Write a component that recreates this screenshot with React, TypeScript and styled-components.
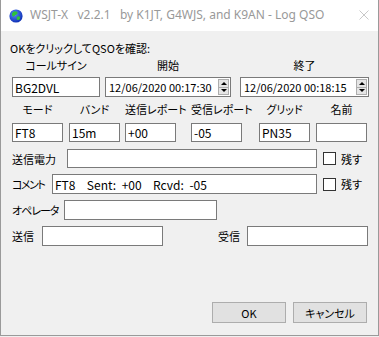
import React from "react";
import styled, { createGlobalStyle } from "styled-components";

const GlobalStyle = createGlobalStyle`
  html, body {
    margin: 0;
    padding: 0;
    background: #f0f0f0;
  }
  body {
    font-family: "Noto Sans CJK JP", "Noto Sans", sans-serif;
    font-size: 11px;
    color: #000;
  }
`;

const Window = styled.div`
  width: 379px;
  height: 336px;
  box-sizing: border-box;
  border: 1px solid #9a9a9a;
  border-top: none;
  background: #f0f0f0;
  display: flex;
  flex-direction: column;
`;

const TitleBar = styled.div`
  height: 31px;
  flex-shrink: 0;
  background: #fff;
  display: flex;
  align-items: center;
  padding-left: 8px;
`;

const Title = styled.span`
  font-family: "Noto Sans", "Open Sans", sans-serif;
  font-size: 12px;
  color: #999;
  white-space: pre;
  margin-left: 7px;
  margin-top: -2px;
`;

const CloseButton = styled.div`
  margin-left: auto;
  width: 28px;
  height: 31px;
  display: flex;
  align-items: center;
  justify-content: center;
  margin-top: -1px;
`;

const Body = styled.div`
  flex: 1;
  display: flex;
  flex-direction: column;
  padding: 0 10px 12px 11px;
  font-feature-settings: "palt";
`;

const Prompt = styled.div`
  line-height: 14px;
  margin: 10px 0 0 -2px;
  white-space: nowrap;
`;

const FieldGrid = styled.div<{ $mt: number }>`
  display: flex;
  margin-top: ${(p) => p.$mt}px;
`;

const Column = styled.div<{ $w: number; $ml?: number }>`
  width: ${(p) => p.$w}px;
  margin-left: ${(p) => p.$ml ?? 0}px;
  display: flex;
  flex-direction: column;
  flex-shrink: 0;
`;

const ColLabel = styled.div<{ $gap: number }>`
  line-height: 14px;
  text-align: center;
  white-space: nowrap;
  margin-bottom: ${(p) => p.$gap}px;
`;

const TextBox = styled.div<{ $w?: number; $h?: number; $ws?: number }>`
  box-sizing: border-box;
  width: ${(p) => (p.$w ? `${p.$w}px` : "100%")};
  height: ${(p) => p.$h ?? 20}px;
  border: 1px solid #7a7a7a;
  background: #fff;
  display: flex;
  align-items: center;
  padding-left: 2px;
  font-size: 12px;
  word-spacing: ${(p) => p.$ws ?? 0}px;
  white-space: pre;
  flex-shrink: 0;
  overflow: hidden;
`;

const DateBox = styled(TextBox)`
  padding-left: 3px;
  padding-right: 1px;
  font-size: 11px;
`;

const DateText = styled.span`
  flex: 1;
`;

const Spinner = styled.div`
  width: 11px;
  height: 16px;
  box-sizing: border-box;
  border: 1px solid #adadad;
  background: #e5e5e5;
  display: flex;
  flex-direction: column;
`;

const SpinHalf = styled.div<{ $down?: boolean }>`
  flex: 1;
  display: flex;
  align-items: center;
  justify-content: center;
  border-top: ${(p) => (p.$down ? "1px solid #adadad" : "none")};

  &::after {
    content: "";
    width: 0;
    height: 0;
    border-left: 3px solid transparent;
    border-right: 3px solid transparent;
    ${(p) =>
      p.$down ? "border-top: 3px solid #000;" : "border-bottom: 3px solid #000;"}
  }
`;

const Row = styled.div<{ $mt: number }>`
  display: flex;
  align-items: center;
  margin-top: ${(p) => p.$mt}px;
`;

const RowLabel = styled.span<{ $w: number; $ls?: number }>`
  width: ${(p) => p.$w}px;
  flex-shrink: 0;
  white-space: nowrap;
  line-height: 14px;
  letter-spacing: ${(p) => p.$ls ?? 0}px;
`;

const Group = styled.div<{ $push?: boolean }>`
  display: flex;
  align-items: center;
  margin-left: ${(p) => (p.$push ? "auto" : "0")};
`;

const CheckBox = styled.div`
  width: 13px;
  height: 13px;
  box-sizing: border-box;
  border: 1px solid #333;
  background: #fff;
  margin-left: 6px;
`;

const CheckLabel = styled.span`
  margin-left: 5px;
  line-height: 14px;
  white-space: nowrap;
`;

const SideLabel = styled.span`
  margin-right: 7px;
  line-height: 14px;
  white-space: nowrap;
`;

const Footer = styled.div`
  margin-top: auto;
  display: flex;
  justify-content: flex-end;
  gap: 7px;
  padding-right: 1px;
`;

const Button = styled.div`
  width: 74px;
  height: 21px;
  box-sizing: border-box;
  border: 1px solid #adadad;
  background: #e1e1e1;
  display: flex;
  align-items: center;
  justify-content: center;
`;

function GlobeIcon() {
  return (
    <svg width="14" height="14" viewBox="0 0 14 14">
      <defs>
        <radialGradient id="sea" cx="0.4" cy="0.35" r="0.7">
          <stop offset="0" stopColor="#5a8cff" />
          <stop offset="1" stopColor="#0a2ab0" />
        </radialGradient>
      </defs>
      <circle cx="7" cy="7" r="6.6" fill="url(#sea)" />
      <path d="M5 2.5 C7 2 9 3 8.5 4.5 C8 6 6 5.5 5.5 7 C5 8.5 3.5 7.5 3 6 C2.6 4.5 3.5 3 5 2.5 Z" fill="#2fc23a" />
      <path d="M8.5 7.5 C10 7 11.5 8 11 9.5 C10.5 11 9 11.5 8 10.5 C7.3 9.7 7.5 8 8.5 7.5 Z" fill="#2fc23a" />
    </svg>
  );
}

function CloseIcon() {
  return (
    <svg width="10" height="10" viewBox="0 0 10 10">
      <path d="M0.5 0.5 L9.5 9.5 M9.5 0.5 L0.5 9.5" stroke="#c8c8c8" strokeWidth="1" />
    </svg>
  );
}

function DateField({ value }: { value: string }) {
  return (
    <DateBox>
      <DateText>{value}</DateText>
      <Spinner>
        <SpinHalf />
        <SpinHalf $down />
      </Spinner>
    </DateBox>
  );
}

export default function App() {
  return (
    <>
      <GlobalStyle />
      <Window>
        <TitleBar>
          <GlobeIcon />
          <Title>{"WSJT-X   v2.2.1   by K1JT, G4WJS, and K9AN - Log QSO"}</Title>
          <CloseButton>
            <CloseIcon />
          </CloseButton>
        </TitleBar>
        <Body>
          <Prompt>OKをクリックしてQSOを確認:</Prompt>

          <FieldGrid $mt={3}>
            <Column $w={88}>
              <ColLabel $gap={5}>コールサイン</ColLabel>
              <TextBox>BG2DVL</TextBox>
            </Column>
            <Column $w={126} $ml={5}>
              <ColLabel $gap={5}>開始</ColLabel>
              <DateField value="12/06/2020 00:17:30" />
            </Column>
            <Column $w={129} $ml={9}>
              <ColLabel $gap={5}>終了</ColLabel>
              <DateField value="12/06/2020 00:18:15" />
            </Column>
          </FieldGrid>

          <FieldGrid $mt={5}>
            <Column $w={51}>
              <ColLabel $gap={7}>モード</ColLabel>
              <TextBox $h={19}>FT8</TextBox>
            </Column>
            <Column $w={51} $ml={6}>
              <ColLabel $gap={7}>バンド</ColLabel>
              <TextBox $h={19}>15m</TextBox>
            </Column>
            <Column $w={51} $ml={5}>
              <ColLabel $gap={7}>送信レポート</ColLabel>
              <TextBox $h={19}>+00</TextBox>
            </Column>
            <Column $w={51} $ml={15}>
              <ColLabel $gap={7}>受信レポート</ColLabel>
              <TextBox $h={19}>-05</TextBox>
            </Column>
            <Column $w={51} $ml={17}>
              <ColLabel $gap={7}>グリッド</ColLabel>
              <TextBox $h={19}>PN35</TextBox>
            </Column>
            <Column $w={51} $ml={6}>
              <ColLabel $gap={7}>名前</ColLabel>
              <TextBox $h={19} />
            </Column>
          </FieldGrid>

          <Row $mt={7}>
            <RowLabel $w={55}>送信電力</RowLabel>
            <TextBox $w={250} $h={19} />
            <CheckBox />
            <CheckLabel>残す</CheckLabel>
          </Row>

          <Row $mt={6}>
            <RowLabel $w={40} $ls={-1.5}>コメント</RowLabel>
            <TextBox $w={265} $ws={3}>{"FT8  Sent: +00  Rcvd: -05"}</TextBox>
            <CheckBox />
            <CheckLabel>残す</CheckLabel>
          </Row>

          <Row $mt={6}>
            <RowLabel $w={52} $ls={-1}>オペレータ</RowLabel>
            <TextBox $w={153} />
          </Row>

          <Row $mt={6}>
            <Group>
              <RowLabel $w={30}>送信</RowLabel>
              <TextBox $w={121} />
            </Group>
            <Group $push>
              <SideLabel>受信</SideLabel>
              <TextBox $w={121} />
            </Group>
          </Row>

          <Footer>
            <Button>OK</Button>
            <Button>キャンセル</Button>
          </Footer>
        </Body>
      </Window>
    </>
  );
}
